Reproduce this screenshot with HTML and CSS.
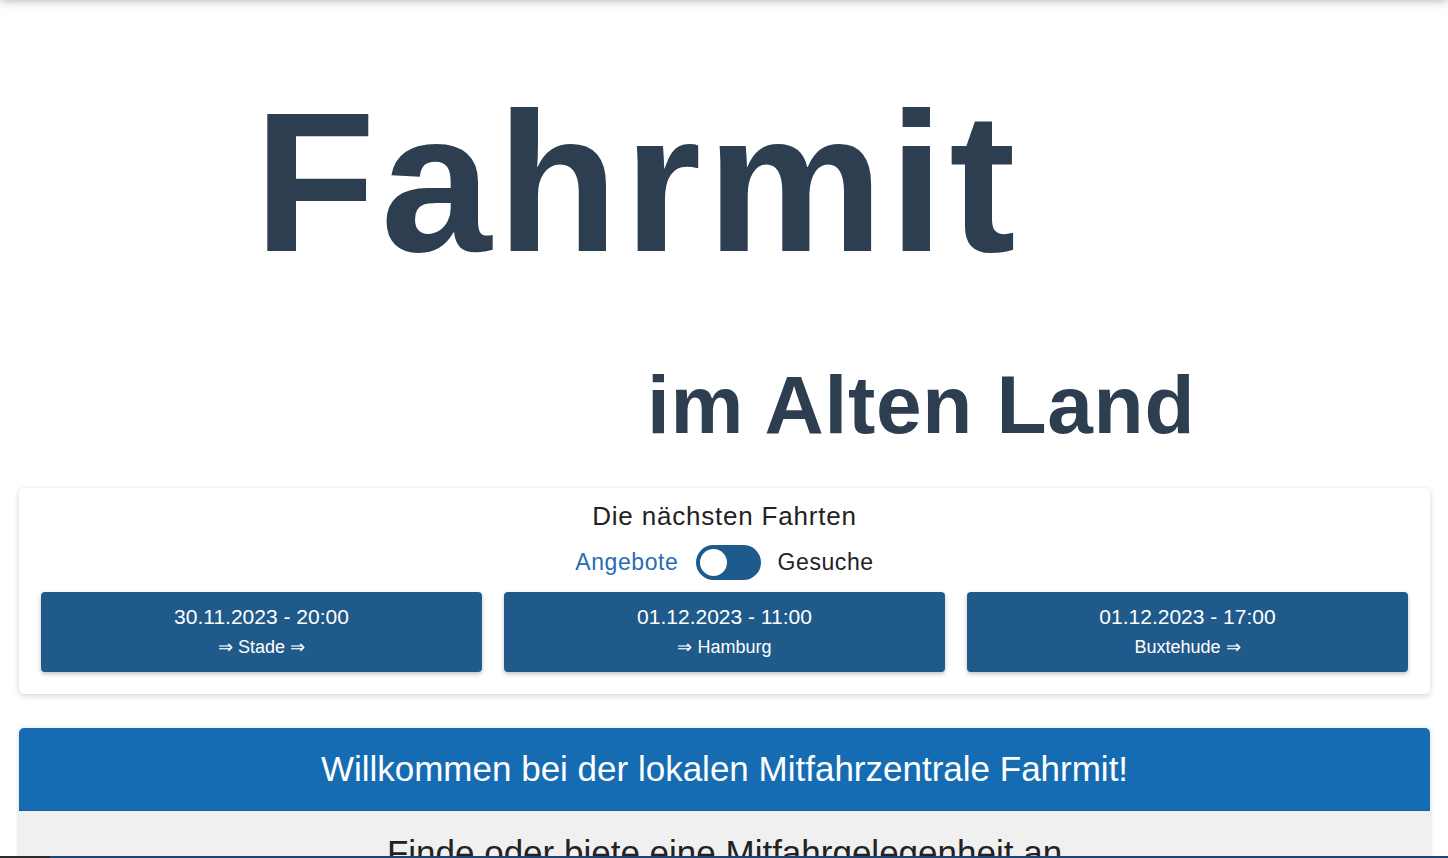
FILE: index.html
```html
<!DOCTYPE html>
<html lang="de">
<head>
<meta charset="utf-8">
<title>Fahrmit im Alten Land</title>
<link rel="stylesheet" href="styles.css">
</head>
<body>
<div class="topbar"></div>
<header class="hero">
  <h1 class="hero-title">Fahrmit</h1>
  <h2 class="hero-sub">im Alten Land</h2>
</header>
<main class="content">
  <section class="rides-card">
    <div class="rides-title">Die nächsten Fahrten</div>
    <div class="toggle-row">
      <span class="toggle-label active">Angebote</span>
      <span class="switch"><span class="knob"></span></span>
      <span class="toggle-label">Gesuche</span>
    </div>
    <div class="rides">
      <a class="ride">
        <span class="ride-date">30.11.2023 - 20:00</span>
        <span class="ride-dest">⇒ Stade ⇒</span>
      </a>
      <a class="ride">
        <span class="ride-date">01.12.2023 - 11:00</span>
        <span class="ride-dest">⇒ Hamburg</span>
      </a>
      <a class="ride">
        <span class="ride-date">01.12.2023 - 17:00</span>
        <span class="ride-dest">Buxtehude ⇒</span>
      </a>
    </div>
  </section>
  <section class="welcome">
    <div class="welcome-head">Willkommen bei der lokalen Mitfahrzentrale Fahrmit!</div>
    <div class="welcome-body">Finde oder biete eine Mitfahrgelegenheit an</div>
  </section>
</main>
<div class="bottombar"><span class="bottombar-left"></span><span class="bottombar-right"></span></div>
</body>
</html>
```
FILE: styles.css
```css
* { box-sizing: border-box; }
html, body { margin: 0; padding: 0; }
body {
  font-family: "Liberation Sans", Arial, sans-serif;
  color: #212529;
  background: #fff;
  overflow: hidden;
}
.topbar {
  position: fixed;
  top: -40px;
  left: 0;
  right: 0;
  height: 40px;
  background: #fff;
  box-shadow: 0 1px 9px rgba(0,0,0,0.28);
  z-index: 5;
}
.hero {
  padding-top: 83px;
}
.hero-title {
  margin: 0;
  padding-left: 254px;
  font-size: 199px;
  line-height: 199px;
  letter-spacing: 5.3px;
  font-weight: 700;
  color: #2c3e50;
}
.hero-sub {
  margin: 82px 0 0;
  padding-left: 647px;
  font-size: 82px;
  line-height: 82px;
  letter-spacing: 0.7px;
  font-weight: 700;
  color: #2c3e50;
}
.content {
  padding: 42px 18px 0 19px;
}
.rides-card {
  background: #fff;
  border-radius: 5px;
  box-shadow: 0 2px 6px rgba(0,0,0,0.16), 0 0 2px rgba(0,0,0,0.06);
  padding: 13px 22px 22px;
  display: flex;
  flex-direction: column;
  align-items: center;
}
.rides-title {
  font-size: 26px;
  line-height: 30px;
  letter-spacing: 0.8px;
  color: #222;
}
.toggle-row {
  margin-top: 13px;
  height: 36px;
  display: flex;
  align-items: center;
  gap: 17px;
}
.toggle-label {
  font-size: 23px;
  letter-spacing: 0.6px;
  color: #222;
}
.toggle-label.active { color: #2a6cb3; }
.switch {
  width: 65px;
  height: 35px;
  border-radius: 18px;
  background: #1e5a8b;
  display: flex;
  align-items: center;
  padding-left: 4px;
}
.knob {
  width: 27px;
  height: 27px;
  border-radius: 50%;
  background: #fff;
}
.rides {
  margin-top: 12px;
  width: 100%;
  display: grid;
  grid-template-columns: repeat(3, 1fr);
  gap: 22px;
}
.ride {
  height: 80px;
  background: #1f5a8a;
  color: #fff;
  border-radius: 4px;
  box-shadow: 0 2px 4px rgba(0,0,0,0.25);
  display: flex;
  flex-direction: column;
  justify-content: center;
  align-items: center;
}
.ride-date {
  font-size: 21px;
  line-height: 31px;
}
.ride-dest {
  font-size: 18px;
  line-height: 31px;
}
.welcome {
  margin-top: 34px;
  border-radius: 5px 5px 0 0;
  box-shadow: 0 1px 5px rgba(0,0,0,0.18);
  overflow: hidden;
}
.welcome-head {
  background: #166cb3;
  color: #fff;
  text-align: center;
  font-size: 35px;
  line-height: 40px;
  padding: 21px 0 21px;
  border-bottom: 1px solid #0f5ea6;
}
.welcome-body {
  background: #f0f0f0;
  text-align: center;
  font-size: 35px;
  line-height: 40px;
  padding: 22px 0 40px;
  color: #222;
}
.bottombar {
  position: fixed;
  left: 0;
  right: 0;
  bottom: 0;
  height: 2px;
  display: flex;
  z-index: 6;
}
.bottombar-left { width: 50px; background: #2a2a2e; }
.bottombar-right { flex: 1; background: #1d4577; }
```
